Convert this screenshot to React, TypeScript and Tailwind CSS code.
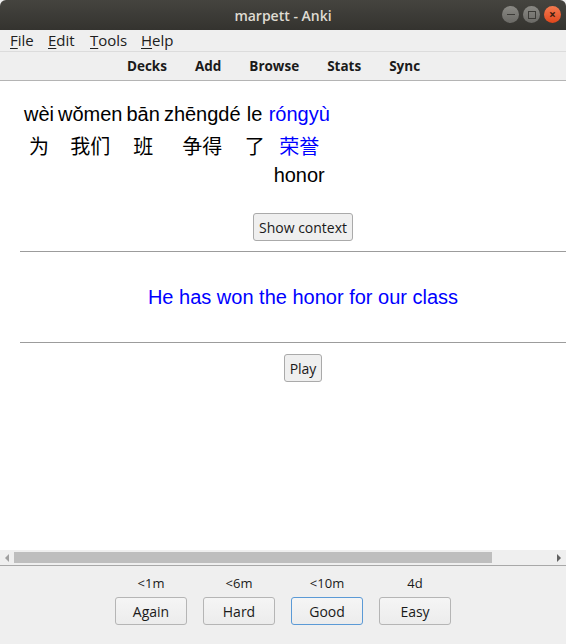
import React from 'react';

const ui = { fontFamily: '"Open Sans", "DejaVu Sans", sans-serif' };
const card = { fontFamily: '"Liberation Sans", "Noto Sans CJK SC", sans-serif' };
const cjk = { fontFamily: '"Noto Sans CJK SC", sans-serif' };

const words = [
  { py: 'wèi', hz: '为' },
  { py: 'wǒmen', hz: '我们' },
  { py: 'bān', hz: '班' },
  { py: 'zhēngdé', hz: '争得' },
  { py: 'le', hz: '了' },
  { py: 'róngyù', hz: '荣誉', en: 'honor', hot: true },
];

const answers = [
  { t: '<1m', label: 'Again' },
  { t: '<6m', label: 'Hard' },
  { t: '<10m', label: 'Good', focus: true },
  { t: '4d', label: 'Easy' },
];

const menus = [
  { k: 'F', rest: 'ile', w: 'w-[38px]' },
  { k: 'E', rest: 'dit', w: 'w-[42px]' },
  { k: 'T', rest: 'ools', w: 'w-[51px]' },
  { k: 'H', rest: 'elp', w: 'w-[40px]' },
];

export default function App() {
  return (
    <div className="w-[566px] h-[644px] flex flex-col overflow-hidden bg-[#efefef]" style={ui}>
      {/* title bar */}
      <div className="h-[30px] shrink-0 flex items-center justify-center relative bg-gradient-to-b from-[#45443f] to-[#34332f] rounded-t-md">
        <span className="text-[14px] font-semibold text-[#dfdbd2]">marpett - Anki</span>
        <div className="absolute right-[5px] top-[6px] flex gap-[4px]">
          <div className="w-[17px] h-[17px] rounded-full bg-gradient-to-b from-[#8a8984] to-[#6a6965] flex items-center justify-center">
            <div className="w-[8px] h-[1.5px] bg-[#3c3b37]" />
          </div>
          <div className="w-[17px] h-[17px] rounded-full bg-gradient-to-b from-[#8a8984] to-[#6a6965] flex items-center justify-center">
            <div className="w-[8px] h-[8px] border border-[#3c3b37]" />
          </div>
          <div className="w-[17px] h-[17px] rounded-full bg-gradient-to-b from-[#f37a4f] to-[#e0461a] flex items-center justify-center text-[#3c1e10] text-[12px] leading-none font-bold">
            ×
          </div>
        </div>
      </div>

      {/* menu bar */}
      <div className="h-[22px] shrink-0 flex items-center pl-[10px] text-[15px] text-[#202020] border-b border-[#dcdcdc]">
        {menus.map((m) => (
          <span key={m.k} className={m.w}>
            <span className="underline underline-offset-2">{m.k}</span>
            {m.rest}
          </span>
        ))}
      </div>

      {/* toolbar */}
      <div className="h-[29px] shrink-0 flex items-center justify-center gap-[28px] pr-[19px] text-[13.5px] font-bold text-[#1a1a1a] border-b border-[#b4b4b4]">
        <span>Decks</span>
        <span>Add</span>
        <span>Browse</span>
        <span>Stats</span>
        <span>Sync</span>
      </div>

      {/* card webview */}
      <div className="flex-1 bg-white overflow-hidden">
        <div className="w-[566px] ml-[20px] pt-[21px]" style={card}>
          <div className="flex items-start gap-[4px] pl-[4px] text-[20px] text-black">
            {words.map((w) => (
              <div key={w.hz} className={`flex flex-col items-center ${w.hot ? 'text-[#0000ff]' : ''}`}>
                <span className="leading-[24px]">{w.py}</span>
                <span className="leading-[30px] mt-[5px]" style={cjk}>{w.hz}</span>
                {w.en && <span className="leading-[28px] text-black">{w.en}</span>}
              </div>
            ))}
          </div>

          <div className="flex justify-center mt-[24px]">
            <button className="h-[28px] px-[5px] text-[14px] text-[#1a1a1a] bg-[#efefef] border border-[#aaaaaa] rounded-[3px]" style={ui}>
              Show context
            </button>
          </div>

          <div className="mt-[10px] h-px bg-[#9c9c9c]" />

          <div className="h-[90px] flex items-center justify-center text-[20px] text-[#0000ff]">
            He has won the honor for our class
          </div>

          <div className="h-px bg-[#9c9c9c]" />

          <div className="flex justify-center mt-[11px]">
            <button className="h-[28px] px-[5px] text-[14px] text-[#1a1a1a] bg-[#efefef] border border-[#aaaaaa] rounded-[3px]" style={ui}>
              Play
            </button>
          </div>
        </div>
      </div>

      {/* horizontal scrollbar */}
      <div className="h-[15px] shrink-0 flex items-center bg-[#efefef]">
        <div className="w-[14px] flex justify-center">
          <div className="w-0 h-0 border-y-[4px] border-y-transparent border-r-[4px] border-r-[#a0a0a0]" />
        </div>
        <div className="w-[478px] h-[11px] bg-[#bebebe]" />
        <div className="flex-1" />
        <div className="w-[14px] flex justify-center">
          <div className="w-0 h-0 border-y-[4px] border-y-transparent border-l-[4px] border-l-[#606060]" />
        </div>
      </div>

      {/* answer bar */}
      <div className="h-[79px] shrink-0 border-t border-[#a8a8a8] flex justify-center gap-[16px] pt-[8px]">
        {answers.map((a) => (
          <div key={a.label} className="flex flex-col items-center w-[72px]">
            <span className="text-[13px] leading-[18px] text-[#1a1a1a] h-[20px]">{a.t}</span>
            <button
              className={`mt-[3px] w-[72px] h-[28px] text-[14px] text-[#1a1a1a] rounded-[3px] bg-gradient-to-b from-[#f5f5f5] to-[#ececec] border ${
                a.focus ? 'border-[#5b9ad6]' : 'border-[#b5b5b5]'
              }`}
              style={ui}
            >
              {a.label}
            </button>
          </div>
        ))}
      </div>
    </div>
  );
}
